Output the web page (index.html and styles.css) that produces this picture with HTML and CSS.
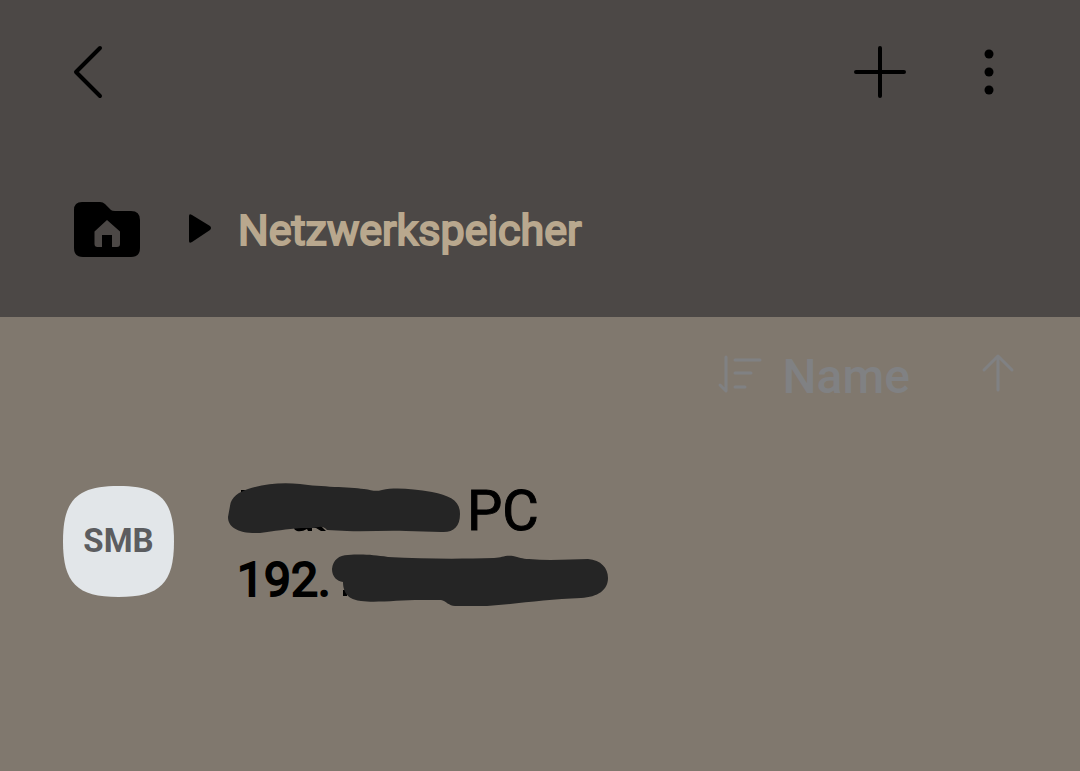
FILE: index.html
```html
<!DOCTYPE html>
<html lang="de">
<head>
<meta charset="utf-8">
<meta name="viewport" content="width=device-width, initial-scale=1">
<title>Netzwerkspeicher</title>
<link rel="stylesheet" href="styles.css">
</head>
<body>
<header class="header">
  <div class="toolbar">
    <button class="icon-button" type="button" aria-label="Zurück">
      <svg width="32" height="56" viewBox="0 0 32 56"><path class="line" d="M28 4 4 28 28 52"/></svg>
    </button>
    <div class="actions">
      <button class="icon-button" type="button" aria-label="Hinzufügen">
        <svg width="52" height="52" viewBox="0 0 52 52"><path class="line" d="M26 2v48M2 26h48"/></svg>
      </button>
      <button class="icon-button" type="button" aria-label="Weitere Optionen">
        <svg width="12" height="48" viewBox="0 0 12 48"><circle cx="6" cy="6" r="4.5"/><circle cx="6" cy="24" r="4.5"/><circle cx="6" cy="42" r="4.5"/></svg>
      </button>
    </div>
  </div>
  <nav class="breadcrumb" aria-label="Pfad">
    <button class="icon-button" type="button" aria-label="Startordner">
      <svg width="66" height="56" viewBox="0 0 66 56"><path fill-rule="evenodd" d="M8 0H26Q29 0 31 2L37 8Q38 9 41 9H57Q66 9 66 18V46Q66 55 57 55H9Q0 55 0 46V8Q0 0 8 0ZM33 18 20.500 29.500V42Q20.500 45 23.500 45H28V33H38V45H43Q46 45 46 42V29.500Z"/></svg>
    </button>
    <svg class="separator" width="24" height="30" viewBox="0 0 24 30" aria-hidden="true"><path d="M1 1Q1-2 4 0L22 11Q24 13 22 15L4 27Q1 29 1 26Z"/></svg>
    <span class="current">Netzwerkspeicher</span>
  </nav>
</header>
<main>
  <div class="sort-bar">
    <button class="icon-button sort-by" type="button">
      <svg width="44" height="40" viewBox="0 0 44 40" aria-hidden="true"><path class="thin" d="M7 1V35M1 29l6 6M16 4H41M16 17H32M16 31H26"/></svg>
      <span>Name</span>
    </button>
    <button class="icon-button" type="button" aria-label="Aufsteigend">
      <svg width="32" height="40" viewBox="0 0 32 40"><path class="thin" d="M16 34V0M2 14 16 0 30 14"/></svg>
    </button>
  </div>
  <ul class="list">
    <li class="entry">
      <div class="tile">
        <svg class="tile-shape" viewBox="0 0 112 112" aria-hidden="true"><path d="M56 0C98 0 112 14 112 56S98 112 56 112 0 98 0 56 14 0 56 0Z"/></svg>
        <span class="tile-label">SMB</span>
      </div>
      <div class="details">
        <div class="name">
          <svg class="redaction" width="233" height="52" viewBox="0 2 233 52" role="img" aria-label="Unkenntlich gemacht"><path class="ink" d="M13 7h6v6h-6ZM66 45q0 2 3 3 5 1 10-2l1 2h4v-3h4l5 3h5l-6-6H70ZM181 42h4v6h-4Z"/><path d="M2 23C3 14 11 9 20 6C36 1 53-1 72 1C93 4 121 4 136 6C144 7 147 9 154 7C168 4 184 6 204 9C222 13 232 17 232 31C232 44 225 50 213 49L178 48C158 47 139 49 119 48L99 47C95 42 90 44 86 45H73C58 46 47 48 32 50C10 51 0 44 0 34Z"/></svg>
          <span>PC</span>
        </div>
        <div class="address">
          <span>192.</span>
          <svg class="redaction" width="277" height="54" viewBox="0 -3 277 54" role="img" aria-label="Unkenntlich gemacht"><path class="ink" d="M11 35h4v6h-4Z"/><path d="M0 14C1 5 7 0 16 0C32-1 41 0 56 2C93 4 129 4 162 3C170 3 172 0 181 1C187 2 190 4 197 4C219 6 240 4 256 4C269 5 276 13 276 23C276 35 266 42 249 43C215 44 185 49 155 51H123C117 51 114 46 109 45H89C67 45 44 48 29 46C20 45 11 41 11 27C5 26 0 22 0 14Z"/></svg>
        </div>
      </div>
    </li>
  </ul>
</main>
</body>
</html>
```
FILE: styles.css
```css
* { box-sizing: border-box; }

body {
  margin: 0;
  min-height: 100vh;
  background: #80786e;
  color: #000;
  font-family: Roboto, "Liberation Sans", sans-serif;
}

svg {
  display: block;
  flex: none;
  overflow: visible;
}

.icon-button {
  display: flex;
  align-items: center;
  padding: 0;
  border: 0;
  background: none;
  color: inherit;
  font: inherit;
  cursor: pointer;
}

.line, .thin {
  fill: none;
  stroke: currentColor;
  stroke-width: 4;
  stroke-linecap: round;
  stroke-linejoin: round;
}

.thin { stroke-width: 3; }

.header {
  padding-bottom: 48px;
  background: #4c4846;
}

.toolbar {
  display: flex;
  align-items: center;
  justify-content: space-between;
  height: 144px;
  padding: 0 85px 0 72px;
}

.actions {
  display: flex;
  align-items: center;
  gap: 77px;
}

.breadcrumb {
  display: flex;
  align-items: center;
  height: 125px;
  padding: 46px 72px 0 74px;
}

.separator { margin: 0 26px 0 48px; }

.current {
  color: #b9a88e;
  font-size: 43px;
  -webkit-text-stroke: 2px currentColor;
}

.sort-bar {
  display: flex;
  align-items: center;
  justify-content: flex-end;
  gap: 72px;
  height: 118px;
  padding-right: 66px;
  color: #808183;
}

.sort-by {
  gap: 20px;
  font-size: 48px;
  font-weight: 500;
}

.list {
  margin: 0;
  padding: 42px 63px;
  list-style: none;
}

.entry {
  display: flex;
  align-items: center;
  gap: 54px;
}

.tile {
  display: grid;
  place-items: center;
  width: 111px;
  height: 111px;
  margin-bottom: 7px;
}

.tile-shape, .tile-label { grid-area: 1 / 1; }

.tile-shape { width: 111px; fill: #e2e6e9; }

.tile-label {
  padding-bottom: 2px;
  color: #5c5d60;
  font-size: 33px;
  font-weight: 700;
}

.name, .address {
  display: flex;
  align-items: center;
  height: 68px;
  -webkit-text-stroke: 2px currentColor;
}

.redaction, .redaction + span { -webkit-text-stroke-width: 1px; }

.name {
  gap: 6px;
  font-size: 56px;
}

.address {
  gap: 1px;
  padding-left: 9px;
  font-size: 48px;
}

.redaction { fill: #252525; }

.ink { fill: #000; }
```
